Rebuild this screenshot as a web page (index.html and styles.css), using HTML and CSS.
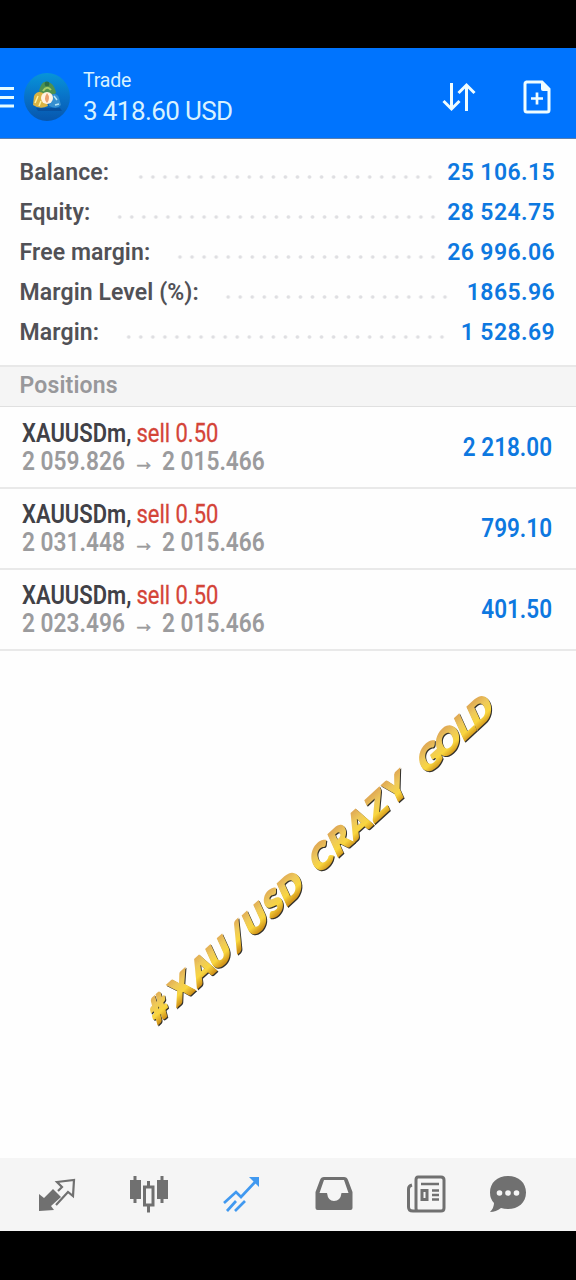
FILE: index.html
```html
<!DOCTYPE html>
<html lang="en">
<head>
    <meta charset="UTF-8">
    <meta name="viewport" content="width=device-width, initial-scale=1.0">
    <title>Trade</title>
    <link rel="stylesheet" href="styles.css">
</head>
<body>

<header class="topbar">
    <svg class="menu" width="14" height="24" viewBox="0 0 14 24">
        <path d="M0 3.500H14M0 12.500H14M0 21H14" stroke="#e4fbff" stroke-width="3"/>
    </svg>
    <svg class="logo" width="48" height="50" viewBox="0 0 48 50">
        <defs>
            <linearGradient id="logoBg" x1="0" y1="0" x2="0" y2="1">
                <stop offset="0" stop-color="#0795d8"/>
                <stop offset="0.5" stop-color="#0872c8"/>
                <stop offset="1" stop-color="#0756ac"/>
            </linearGradient>
        </defs>
        <ellipse cx="24" cy="25" rx="23" ry="24" fill="url(#logoBg)"/>
        <path d="M13 36H37L39 39H15Z" fill="#07458f" opacity=".6"/>
        <path d="M16 20C17 12 21 9 24 10C29 10 32 15 33 21L28 24H19Z" fill="#4d9151"/>
        <circle cx="24" cy="12" r="2.4" fill="#2c6e46"/>
        <path d="M20 19Q24 13 28 18" fill="none" stroke="#a5cc67" stroke-width="2"/>
        <path d="M10 33L11 24Q14 18 20 21L25 34Q17 38 10 33Z" fill="#d9b343"/>
        <path d="M12 31L15 24M16 34L18 29" stroke="#fff1a0" stroke-width="1.500"/>
        <path d="M27 23Q34 20 36 26L38 33Q34 38 26 34Z" fill="#368fd0"/>
        <path d="M31 24L34 28M32 33L36 32" stroke="#b9e7f8" stroke-width="1.500"/>
        <circle cx="24" cy="26" r="6" fill="#fff3e2"/>
        <path d="M24 21Q28 26 24 31Q20 27 24 21Z" fill="#eba070"/>
    </svg>
    <div class="heading">
        <div class="title">Trade</div>
        <div class="profit">3 418.60 USD</div>
    </div>
    <svg class="sort" width="36" height="32" viewBox="0 0 36 32" fill="none" stroke="#effdff" stroke-width="3">
        <path d="M11.500 2V28M3.500 20L11.500 28L19.500 20M26.500 30V4M18.500 12L26.500 4L34.500 12"/>
    </svg>
    <svg class="new-order" width="28" height="34" viewBox="0 0 28 34" fill="none" stroke="#effdff">
        <path d="M3 2H19L26 9V30Q26 32 24 32H4Q2 32 2 30V4Q2 2 4 2" stroke-width="3"/>
        <path d="M18 1L27 10V11H20Q18 11 18 9Z" fill="#effdff" stroke="none"/>
        <path d="M14 12.500V24.500M8 18.500H20" stroke-width="2.700"/>
    </svg>
</header>

<section class="account">
    <div class="account-row balance">
        <span class="label">Balance:</span><span class="dots"></span><span class="value">25 106.15</span>
    </div>
    <div class="account-row equity">
        <span class="label">Equity:</span><span class="dots"></span><span class="value">28 524.75</span>
    </div>
    <div class="account-row free">
        <span class="label">Free margin:</span><span class="dots"></span><span class="value">26 996.06</span>
    </div>
    <div class="account-row level">
        <span class="label">Margin Level (%):</span><span class="dots"></span><span class="value">1865.96</span>
    </div>
    <div class="account-row margin">
        <span class="label">Margin:</span><span class="dots"></span><span class="value">1 528.69</span>
    </div>
</section>

<h2 class="section-title">Positions</h2>

<main class="positions">
    <div class="position">
        <svg class="deal" width="260" height="60" viewBox="0 0 302 60" preserveAspectRatio="none">
            <text class="symbol" x="0" y="27" textLength="127" lengthAdjust="spacingAndGlyphs">XAUUSDm,</text>
            <text class="sell" x="133" y="27" textLength="95" lengthAdjust="spacingAndGlyphs">sell 0.50</text>
            <text class="price" x="0" y="55" textLength="119.500" lengthAdjust="spacingAndGlyphs">2 059.826</text>
            <text class="arrow" x="129" y="55">→</text>
            <text class="price" x="162.500" y="55" textLength="119.500" lengthAdjust="spacingAndGlyphs">2 015.466</text>
        </svg>
        <svg class="result" width="90" height="30" viewBox="0 0 105 30" preserveAspectRatio="none">
            <text x="1" y="25" textLength="104" lengthAdjust="spacingAndGlyphs">2 218.00</text>
        </svg>
    </div>
    <div class="position">
        <svg class="deal" width="260" height="60" viewBox="0 0 302 60" preserveAspectRatio="none">
            <text class="symbol" x="0" y="27" textLength="127" lengthAdjust="spacingAndGlyphs">XAUUSDm,</text>
            <text class="sell" x="133" y="27" textLength="95" lengthAdjust="spacingAndGlyphs">sell 0.50</text>
            <text class="price" x="0" y="55" textLength="119.500" lengthAdjust="spacingAndGlyphs">2 031.448</text>
            <text class="arrow" x="129" y="55">→</text>
            <text class="price" x="162.500" y="55" textLength="119.500" lengthAdjust="spacingAndGlyphs">2 015.466</text>
        </svg>
        <svg class="result" width="90" height="30" viewBox="0 0 105 30" preserveAspectRatio="none">
            <text x="22.500" y="25" textLength="82.500" lengthAdjust="spacingAndGlyphs">799.10</text>
        </svg>
    </div>
    <div class="position">
        <svg class="deal" width="260" height="60" viewBox="0 0 302 60" preserveAspectRatio="none">
            <text class="symbol" x="0" y="27" textLength="127" lengthAdjust="spacingAndGlyphs">XAUUSDm,</text>
            <text class="sell" x="133" y="27" textLength="95" lengthAdjust="spacingAndGlyphs">sell 0.50</text>
            <text class="price" x="0" y="55" textLength="119.500" lengthAdjust="spacingAndGlyphs">2 023.496</text>
            <text class="arrow" x="129" y="55">→</text>
            <text class="price" x="162.500" y="55" textLength="119.500" lengthAdjust="spacingAndGlyphs">2 015.466</text>
        </svg>
        <svg class="result" width="90" height="30" viewBox="0 0 105 30" preserveAspectRatio="none">
            <text x="22.500" y="25" textLength="82.500" lengthAdjust="spacingAndGlyphs">401.50</text>
        </svg>
    </div>
</main>

<!-- gold lettering over the empty part of the list -->
<svg class="watermark" width="400" height="370" viewBox="120 670 400 370">
    <defs>
        <linearGradient id="gold" gradientUnits="userSpaceOnUse" x1="0" y1="-25" x2="0" y2="0">
            <stop offset="0" stop-color="#e0aa55"/>
            <stop offset="0.35" stop-color="#eec95a"/>
            <stop offset="0.7" stop-color="#f9d63f"/>
            <stop offset="1" stop-color="#d2951a"/>
        </linearGradient>
    </defs>
    <g transform="translate(159 1023) rotate(-42.500) skewX(-18) scale(1.1 1)" fill="url(#gold)" stroke="url(#gold)" stroke-width="2" text-anchor="middle">
        <text y="0" x="6 33 59 80 103 125 147 168">#XAU/USD</text>
        <text y="-2" x="207 230 253 276 299">CRAZY</text>
        <text y="-2" x="341 363 384 403">GOLD</text>
    </g>
</svg>

<nav class="tabs">
    <svg width="40" height="38" viewBox="0 0 40 38">
        <path d="M2 19L7 23L16 14L24 22L14 31L17 35L2 36Z" fill="#707070"/>
        <path d="M21 16L25 12L20 7L37 5L36 21L31 17L19 30" fill="none" stroke="#707070" stroke-width="2.200"/>
    </svg>
    <svg class="candles" width="40" height="38" viewBox="0 0 40 38" fill="#707070">
        <path d="M1 5H4.500V1H7.500V5H12V24H7.500V28H4.500V24H1ZM28 5H31.500V1H34.500V5H39V24H34.500V28H31.500V24H28Z"/>
        <path d="M19.500 6V11M19.500 31V37.500" stroke="#707070" stroke-width="3"/>
        <rect x="15.500" y="12" width="8.500" height="18" fill="none" stroke="#707070" stroke-width="3"/>
    </svg>
    <svg width="40" height="38" viewBox="0 0 40 38" fill="none" stroke="#4199f0" stroke-width="2.700">
        <path d="M2 28L14 17L19 22L35 5M5 36L14 26M13 36L23 26"/>
        <path d="M27 2H37V12Z" fill="#4199f0" stroke="none"/>
    </svg>
    <svg width="40" height="38" viewBox="0 0 40 38">
        <path fill="#707070" fill-rule="evenodd" d="M9 2H29Q32 2 33 5L37.500 17V33Q37.500 35 35.500 35H2.500Q.5 35 .5 33V17L5 5Q6 2 9 2ZM9 5L4.500 18H12Q13 26 19 26Q25.500 26 26.500 18H33.500L29 5Z"/>
    </svg>
    <svg width="40" height="38" viewBox="0 0 40 38" fill="none" stroke="#707070" stroke-width="3">
        <path d="M11 2H34Q37 2 37 5V33Q37 36 34 36H11Q9 36 9 33V5Q9 2 11 2ZM5 10Q1.500 11 1.500 14V32Q1.500 36 6 36H12"/>
        <path d="M14 9H32M25 15.500H32M25 20H32M25 24.500H32" stroke-width="2.500"/>
        <rect x="15" y="15.500" width="5" height="9"/>
    </svg>
    <svg class="chat" width="40" height="38" viewBox="0 0 40 38">
        <path d="M20 1C31 1 38 8 38 17.500C38 28 30 34 20 34Q16 34 13 33Q8 37 2 37Q6 33 6 28Q2 24 2 17.500C2 8 9 1 20 1Z" fill="#707070"/>
        <circle cx="11.500" cy="18" r="2.800" fill="#f5f5f5"/>
        <circle cx="20" cy="18" r="2.800" fill="#f5f5f5"/>
        <circle cx="28.500" cy="18" r="2.800" fill="#f5f5f5"/>
    </svg>
</nav>

</body>
</html>
```
FILE: styles.css
```css
* {
    box-sizing: border-box;
}
body {
    margin: 0;
    height: 1280px;
    padding: 48px 0 49px;
    display: flex;
    flex-direction: column;
    background-color: #000;
    font-family: Roboto, sans-serif;
    position: relative;
}
svg {
    display: block;
    flex: none;
}
.topbar {
    height: 91px;
    flex: none;
    display: flex;
    align-items: center;
    background-color: #0074fe;
    border-bottom: 1px solid #5b7fae;
    padding-top: 7px;
}
.menu {
    margin-top: 1px;
}
.logo {
    margin-left: 9px;
}
.heading {
    margin: 4px 0 0 12px;
    flex: 1;
    color: #d8f2ff;
}
.title {
    font-size: 19.5px;
    line-height: 25px;
    letter-spacing: -0.2px;
}
.profit {
    font-size: 26px;
    line-height: 36px;
    letter-spacing: -0.6px;
}
.sort {
    margin: 0 47px 0 0;
}
.new-order {
    margin-right: 25px;
}
.account {
    height: 226px;
    flex: none;
    background-color: #fefefe;
    padding: 13px 21px 0 20px;
}
.account-row {
    height: 40px;
    display: grid;
    align-items: center;
    font-size: 23px;
    font-weight: 600;
    letter-spacing: 0.1px;
    color: #515156;
    white-space: nowrap;
}
.label {
    margin-left: -0.4px;
}
.balance {
    grid-template-columns: 114px 302px 1fr;
}
.equity {
    grid-template-columns: 94px 325px 1fr;
}
.free {
    grid-template-columns: 154px 265px 1fr;
}
.level {
    grid-template-columns: 202px 229px 1fr;
}
.margin {
    grid-template-columns: 103px 325px 1fr;
}
.dots {
    height: 12px;
    margin-top: 10px;
    background: radial-gradient(circle, #dfdfe2 1.2px, transparent 2.3px) right center / 12.05px 12px repeat-x;
}
.value {
    color: #0d78e0;
    text-align: right;
    letter-spacing: 0.4px;
}
.section-title {
    margin: 0;
    height: 42px;
    flex: none;
    border-top: 2px solid #e8e8e8;
    border-bottom: 1px solid #e0e0e0;
    background-color: #f5f5f5;
    padding-left: 19.5px;
    font-size: 23px;
    font-weight: 600;
    line-height: 38px;
    letter-spacing: 0.15px;
    color: #98989b;
}
.positions {
    flex: 1;
    padding-top: 1px;
    background-color: #fefefe;
}
.position {
    height: 81px;
    border-bottom: 2px solid #e9e9e9;
    padding: 0 24px 0 22px;
    display: flex;
    justify-content: space-between;
    align-items: center;
    font-size: 26px;
    font-weight: 600;
}
.deal {
    margin-top: -6px;
}
.symbol {
    fill: #414147;
}
.sell {
    fill: #d44438;
    font-weight: 400;
    stroke: #d44438;
    stroke-width: 0.3px;
}
.price {
    fill: #9b9b9d;
}
.arrow {
    fill: #9b9b9d;
    stroke: #9b9b9d;
    stroke-width: 0.7px;
    font-family: "Liberation Sans", sans-serif;
    font-size: 25px;
}
.result {
    fill: #0d78e0;
    margin-top: -3px;
    overflow: visible;
}
.watermark {
    position: absolute;
    left: 120px;
    top: 670px;
    font-family: Lato, sans-serif;
    font-size: 31px;
    font-weight: 900;
    filter: drop-shadow(1px 1px 0.5px #33312c);
}
.tabs {
    height: 73px;
    flex: none;
    display: flex;
    gap: 52.5px;
    padding: 17px 0 0 37px;
    background-color: #f5f5f5;
}
.candles {
    margin-left: -1px;
    margin-right: 1px;
}
.chat {
    margin-left: -12px;
}
```
